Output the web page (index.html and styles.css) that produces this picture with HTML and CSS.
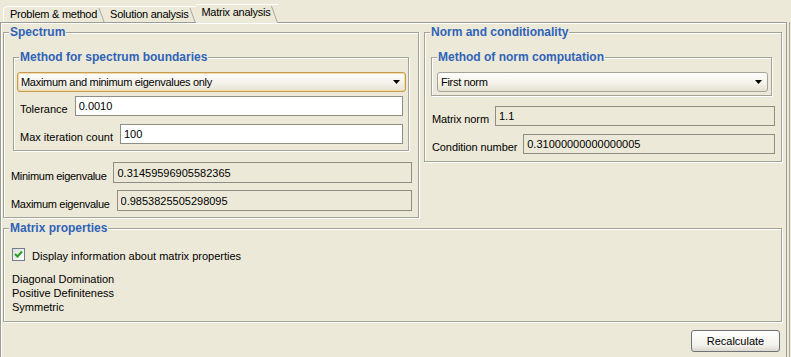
FILE: index.html
```html
<!DOCTYPE html>
<html lang="en">
<head>
    <meta charset="utf-8">
    <title>Matrix analysis</title>
    <link rel="stylesheet" href="styles.css">
</head>
<body>
    <div class="tabs">
        <div class="tab first">Problem &amp; method</div>
        <div class="tab">Solution analysis</div>
        <div class="tab active">Matrix analysis</div>
    </div>
    <div class="pane">
        <div class="top-row">
            <fieldset class="group spectrum">
                <legend>Spectrum</legend>
                <fieldset class="group method">
                    <legend>Method for spectrum boundaries</legend>
                    <div class="combo hot">
                        <span>Maximum and minimum eigenvalues only</span>
                        <svg class="arrow" width="7" height="4" viewBox="0 0 7 4"><polygon points="0,0 7,0 3.5,4" fill="#000"/></svg>
                    </div>
                    <div class="row first-row">
                        <label>Tolerance</label>
                        <input class="field" type="text" value="0.0010">
                    </div>
                    <div class="row second-row">
                        <label>Max iteration count</label>
                        <input class="field" type="text" value="100">
                    </div>
                </fieldset>
                <div class="row eigen eigen-min">
                    <label>Minimum eigenvalue</label>
                    <input class="field readonly tall" type="text" value="0.31459596905582365" readonly>
                </div>
                <div class="row eigen eigen-max">
                    <label>Maximum eigenvalue</label>
                    <input class="field readonly tall" type="text" value="0.9853825505298095" readonly>
                </div>
            </fieldset>

            <fieldset class="group norm">
                <legend>Norm and conditionality</legend>
                <fieldset class="group norm-method">
                    <legend>Method of norm computation</legend>
                    <div class="combo">
                        <span>First norm</span>
                        <svg class="arrow" width="7" height="4" viewBox="0 0 7 4"><polygon points="0,0 7,0 3.5,4" fill="#000"/></svg>
                    </div>
                </fieldset>
                <div class="row norm-row">
                    <label>Matrix norm</label>
                    <input class="field readonly" type="text" value="1.1" readonly>
                </div>
                <div class="row cond-row">
                    <label>Condition number</label>
                    <input class="field readonly" type="text" value="0.31000000000000005" readonly>
                </div>
            </fieldset>
        </div>

        <fieldset class="group props">
            <legend>Matrix properties</legend>
            <div class="check-row">
                <span class="checkbox">
                    <svg width="11" height="11" viewBox="0 0 11 11"><polyline points="2,5 4.5,7.5 9,2.5" fill="none" stroke="#21a121" stroke-width="2"/></svg>
                </span>
                <span>Display information about matrix properties</span>
            </div>
            <ul class="prop-list">
                <li>Diagonal Domination</li>
                <li>Positive Definiteness</li>
                <li>Symmetric</li>
            </ul>
        </fieldset>

        <div class="actions">
            <button class="btn">Recalculate</button>
        </div>
    </div>
</body>
</html>
```

FILE: styles.css
```css
body {
    margin: 0;
    width: 791px;
    height: 357px;
    overflow: hidden;
    background: #ece9d8;
    font: 11px "Liberation Sans", Arial, sans-serif;
    color: #000;
}

/* tabs */
.tabs {
    display: flex;
    align-items: flex-end;
    height: 22px;
    padding-left: 3px;
}
.tab {
    position: relative;
    height: 15px;
    line-height: 14px;
    padding: 0 8px 0 5px;
    border-top: 1px solid #fff;
    white-space: nowrap;
    letter-spacing: -0.25px;
}
.tab::after {
    content: '';
    position: absolute;
    right: 3px;
    top: 1px;
    bottom: 0;
    width: 1px;
    background: #a9a89d;
    transform: skewX(20deg);
}
.tab.first {
    padding-left: 6px;
    border-left: 1px solid #fff;
    border-top-left-radius: 5px;
}
.tab.active {
    height: 18px;
    line-height: 15px;
    margin-bottom: -1px;
    background: #ece9d8;
    z-index: 1;
}

.pane {
    width: 787px;
    height: 340px;
    box-sizing: border-box;
    border-top: 1px solid #9d9c92;
    border-left: 1px solid #9d9c92;
    border-right: 1px solid #9d9c92;
    box-shadow: inset 1px 1px 0 #fff, 2px 0 0 #ece9d8, 3px 0 0 #aaa99e;
    padding: 3px 0 0 2px;
}

.top-row {
    display: flex;
    align-items: flex-start;
    gap: 5px;
}

/* titled borders */
.group {
    margin: 0;
    padding: 0;
    min-width: 0;
    border: 1px solid #a3a297;
    box-shadow: inset 1px 1px 0 #fff, 1px 1px 0 #fff;
}
.group legend {
    padding: 0 1px;
    line-height: 13px;
    font-size: 12px;
    font-weight: bold;
    color: #3063b8;
    background: #ece9d8;
}
.spectrum > legend,
.norm > legend {
    margin-left: -1px;
}
.method > legend {
    margin-left: 2px;
}
.norm-method > legend {
    margin-left: 0;
}
.props > legend {
    margin-left: -3px;
}

.spectrum {
    width: 416px;
    box-sizing: border-box;
    padding: 0 6px 6px 6px;
}
.method {
    margin: 12px 3px 0 3px;
    padding: 8px 2px 6px 3px;
}
.norm {
    width: 358px;
    box-sizing: border-box;
    padding: 0 6px 7px 6px;
}
.norm-method {
    margin: 12px 3px 0 0;
    padding: 8px 3px 3px 5px;
}

/* combo */
.combo {
    display: flex;
    align-items: center;
    justify-content: space-between;
    height: 20px;
    box-sizing: border-box;
    padding: 0 5px 0 3px;
    border: 1px solid #a5a498;
    border-radius: 3px;
    background: linear-gradient(#fefefd, #f3f1e8 60%, #e4e1d3);
}
.combo span {
    letter-spacing: -0.3px;
}
.combo.hot {
    border-color: #c59a55;
    box-shadow: inset 0 0 0 1px #f6d8a2;
}

/* label + field rows */
.row {
    display: flex;
    align-items: center;
    gap: 7px;
}
.row label {
    padding-top: 6px;
    white-space: nowrap;
}
.method .row {
    padding: 0 3px;
}
.first-row { margin-top: 4px; }
.second-row { margin-top: 8px; }
.eigen-min { margin-top: 11px; }
.eigen-max { margin-top: 7px; }
.norm-row { margin-top: 10px; }
.cond-row { margin-top: 8px; }
.spectrum > .row label,
.norm > .row label {
    padding-left: 1px;
}
.eigen label {
    letter-spacing: -0.3px;
}
.norm > .row {
    gap: 6px;
}
.norm > .row label {
    letter-spacing: -0.1px;
}

.field {
    flex: 1;
    min-width: 0;
    height: 20px;
    box-sizing: border-box;
    margin: 0;
    padding: 0 3px;
    border: 1px solid #8e8e86;
    background: #fff;
    font: 11px "Liberation Sans", Arial, sans-serif;
    color: #000;
    outline: none;
}
.field.readonly {
    background: #ece9d8;
}
.field.tall {
    height: 21px;
}

/* matrix properties */
.props {
    margin-top: 4px;
    width: 779px;
    box-sizing: border-box;
    padding: 0 8px 7px 8px;
}
.check-row {
    display: flex;
    align-items: center;
    gap: 7px;
    margin-top: 13px;
    height: 13px;
}
.checkbox {
    display: flex;
    align-items: center;
    justify-content: center;
    width: 13px;
    height: 13px;
    box-sizing: border-box;
    border: 1px solid #6f7d8c;
    background: linear-gradient(135deg, #dcdcd7, #fff);
}
.check-row span:last-child {
    padding-top: 3px;
}
.prop-list {
    list-style: none;
    margin: 11px 0 0 0;
    padding: 0;
    line-height: 14px;
}

.actions {
    display: flex;
    justify-content: flex-end;
    width: 779px;
    margin-top: 8px;
}
.btn {
    width: 89px;
    height: 22px;
    margin-right: 2px;
    padding: 0;
    border: 1px solid #6e737a;
    border-radius: 3px;
    background: linear-gradient(#ffffff, #f3f2ec 70%, #dcd8ce);
    font: 11px "Liberation Sans", Arial, sans-serif;
    color: #000;
}
```
